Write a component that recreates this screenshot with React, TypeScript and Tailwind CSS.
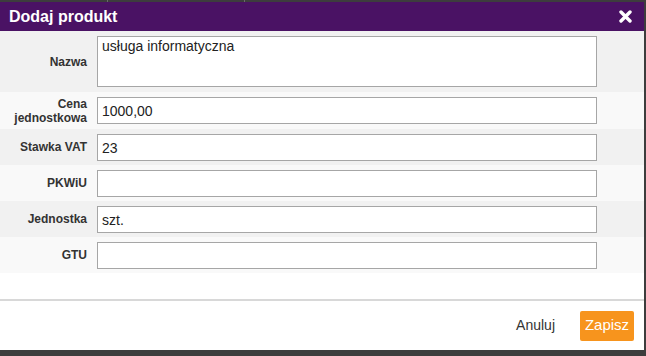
import React from "react";

const rows: { label: React.ReactNode; value: string; tall?: boolean; bg: string; h: string }[] = [
  { label: "Nazwa", value: "usługa informatyczna", tall: true, bg: "bg-[#f1f1f1]", h: "h-[61px]" },
  { label: <>Cena<br />jednostkowa</>, value: "1000,00", bg: "bg-[#f9f9f9]", h: "h-[37px]" },
  { label: "Stawka VAT", value: "23", bg: "bg-[#f1f1f1]", h: "h-[36px]" },
  { label: "PKWiU", value: "", bg: "bg-[#f9f9f9]", h: "h-[36px]" },
  { label: "Jednostka", value: "szt.", bg: "bg-[#f1f1f1]", h: "h-[36px]" },
  { label: "GTU", value: "", bg: "bg-[#f9f9f9]", h: "h-[36px]" },
];

export default function App() {
  return (
    <div
      className="w-[646px] h-[356px] bg-[#3d3d3d] flex flex-col overflow-hidden"
      style={{ fontFamily: '"Liberation Sans", Arial, sans-serif' }}
    >
      <div className="h-[2px] relative shrink-0">
        <div className="absolute left-[107px] top-0 w-px h-[2px] bg-[#6a6a6a]" />
        <div className="absolute left-[244px] top-0 w-px h-[2px] bg-[#6a6a6a]" />
      </div>
      <div className="w-[644px] h-[348px] bg-white flex flex-col shrink-0">
        <div className="h-[29px] bg-[#4a1264] flex items-center justify-between pl-[9px] pr-[12px] shrink-0">
          <span className="text-white font-bold text-[16px] leading-none whitespace-nowrap">
            Dodaj produkt
          </span>
          <svg width="13" height="13" viewBox="0 0 13 13">
            <path d="M2 2 L11 11 M11 2 L2 11" stroke="white" strokeWidth="3.4" strokeLinecap="round" />
          </svg>
        </div>
        <div className="flex flex-col">
          {rows.map((r, i) => (
            <div key={i} className={`flex items-center ${r.bg} ${r.h}`}>
              <div className="w-[87px] pr-0 text-right text-[12px] font-bold text-[#333] leading-[14px]">
                {r.label}
              </div>
              <div className="ml-[10px]">
                {r.tall ? (
                  <div className="w-[500px] h-[51px] bg-white border border-[#a6a6a6] px-[4px] pt-[1px] text-[14px] text-[#222] leading-[17px]">
                    {r.value}
                  </div>
                ) : (
                  <div className="w-[500px] h-[27px] bg-white border border-[#a6a6a6] px-[4px] flex items-center text-[14px] text-[#222] pt-[2px]">
                    {r.value}
                  </div>
                )}
              </div>
            </div>
          ))}
        </div>
        <div className="flex-1" />
        <div className="h-[2px] bg-[#d8d8d8]" />
        <div className="h-[49px] flex items-center justify-end pr-[10px] gap-[25px] shrink-0">
          <span className="text-[14px] text-[#333]">Anuluj</span>
          <button className="w-[54px] h-[30px] rounded-[2px] bg-[#f7941d] text-white text-[15px] flex items-center justify-center">
            Zapisz
          </button>
        </div>
      </div>
    </div>
  );
}
